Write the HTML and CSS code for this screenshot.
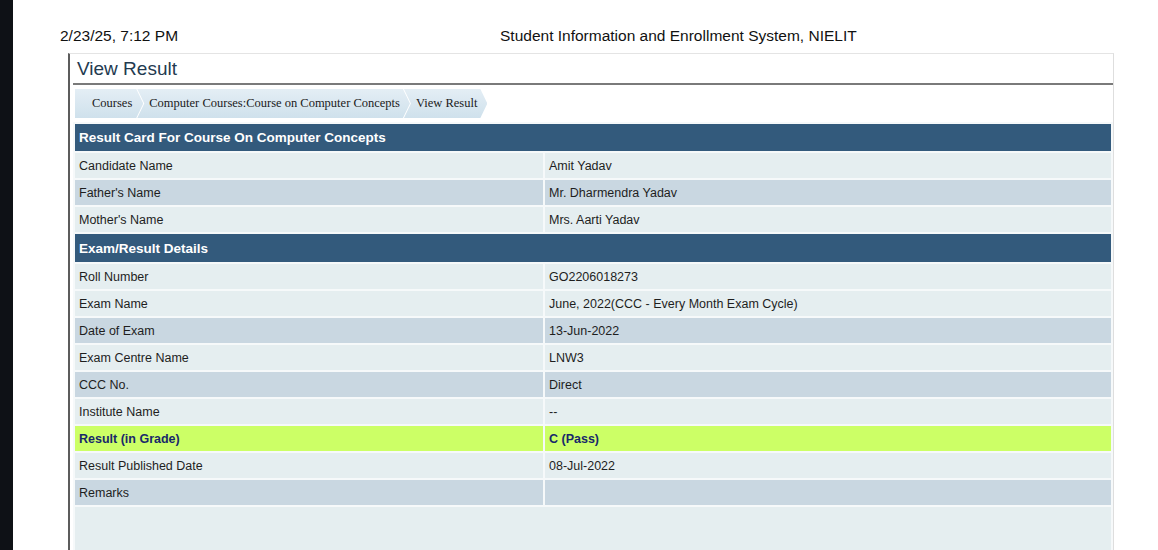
FILE: index.html
```html
<!DOCTYPE html>
<html lang="en">
<head>
<meta charset="utf-8">
<title>Student Information and Enrollment System, NIELIT</title>
<link rel="stylesheet" href="styles.css">
</head>
<body>
<div class="shell">
  <div class="edge"></div>
  <div class="page">
    <div class="print-head">
      <span class="stamp">2/23/25, 7:12 PM</span>
      <span class="doc-title">Student Information and Enrollment System, NIELIT</span>
    </div>
    <div class="panel">
      <h1 class="panel-title">View Result</h1>
      <ul class="crumbs">
        <li class="crumb first">Courses</li>
        <li class="crumb">Computer Courses:Course on Computer Concepts</li>
        <li class="crumb">View Result</li>
      </ul>
      <table class="result">
        <colgroup><col class="col-label"><col></colgroup>
        <tr><th colspan="2">Result Card For Course On Computer Concepts</th></tr>
        <tr class="odd"><td>Candidate Name</td><td>Amit Yadav</td></tr>
        <tr class="even"><td>Father's Name</td><td>Mr. Dharmendra Yadav</td></tr>
        <tr class="odd"><td>Mother's Name</td><td>Mrs. Aarti Yadav</td></tr>
        <tr class="section"><th colspan="2">Exam/Result Details</th></tr>
        <tr class="odd"><td>Roll Number</td><td>GO2206018273</td></tr>
        <tr class="odd"><td>Exam Name</td><td>June, 2022(CCC - Every Month Exam Cycle)</td></tr>
        <tr class="even"><td>Date of Exam</td><td>13-Jun-2022</td></tr>
        <tr class="odd"><td>Exam Centre Name</td><td>LNW3</td></tr>
        <tr class="even"><td>CCC No.</td><td>Direct</td></tr>
        <tr class="odd"><td>Institute Name</td><td>--</td></tr>
        <tr class="grade"><td>Result (in Grade)</td><td>C (Pass)</td></tr>
        <tr class="odd"><td>Result Published Date</td><td>08-Jul-2022</td></tr>
        <tr class="even"><td>Remarks</td><td></td></tr>
        <tr class="odd blank"><td colspan="2"></td></tr>
      </table>
    </div>
  </div>
</div>
</body>
</html>
```

FILE: styles.css
```css
html, body {
  margin: 0;
  padding: 0;
  height: 100%;
  overflow: hidden;
  background: #ffffff;
}

body {
  font-family: "Liberation Sans", Arial, sans-serif;
  color: #111;
}

.shell {
  display: flex;
  min-height: 100%;
}

.edge {
  width: 13px;
  flex: 0 0 13px;
  background: #0e1116;
}

.page {
  flex: 1;
  padding-left: 47px;
}

.print-head {
  display: flex;
  padding-top: 27px;
  height: 18px;
  margin-bottom: 8px;
  font-size: 15.5px;
  line-height: 18px;
  color: #111;
}

.stamp {
  width: 440px;
  flex: 0 0 440px;
}

.panel {
  margin-left: 8px;
  width: 1040px;
  min-height: 500px;
  padding: 0 0 0 3px;
  border-top: 1px solid #e4e4e4;
  border-left: 2px solid #5c5c5c;
  border-right: 1px solid #dedede;
}

.panel-title {
  margin: 0;
  padding-left: 4px;
  height: 29px;
  font-size: 19px;
  line-height: 29px;
  font-weight: normal;
  color: #233a50;
  border-bottom: 2px solid #7a7a7a;
}

.crumbs {
  list-style: none;
  margin: 4px 0 0 2px;
  padding: 0;
  display: flex;
  height: 29px;
}

.crumb {
  height: 29px;
  line-height: 29px;
  font-family: "Liberation Serif", "Times New Roman", serif;
  font-size: 12.5px;
  color: #1b1b1b;
  padding: 0 10px 0 12px;
  margin-left: -6px;
  background: linear-gradient(#e4eef5, #cfe1ec);
  clip-path: polygon(0 0, calc(100% - 7px) 0, 100% 50%, calc(100% - 7px) 100%, 0 100%, 7px 50%);
}

.crumb.first {
  margin-left: 0;
  padding-left: 17px;
  padding-right: 11px;
  clip-path: polygon(0 0, calc(100% - 7px) 0, 100% 50%, calc(100% - 7px) 100%, 0 100%);
}

.result {
  width: 1040px;
  margin-top: 4px;
  border-collapse: separate;
  border-spacing: 2px;
  background: #f6f9fa;
  font-size: 12.5px;
  table-layout: fixed;
}

.col-label {
  width: 468px;
}

.result th {
  height: 27px;
  padding: 0 4px;
  text-align: left;
  background: #335a7c;
  color: #ffffff;
  font-size: 13.5px;
  font-weight: bold;
}

.section th {
  height: 28px;
}

.result td {
  height: 25px;
  padding: 0 4px;
  color: #1e1e1e;
}

.odd td {
  background: #e5eef0;
}

.even td {
  background: #c9d7e1;
}

.grade td {
  background: #ccff66;
  color: #18286a;
  font-weight: bold;
}

.blank td {
  height: 60px;
}
```
